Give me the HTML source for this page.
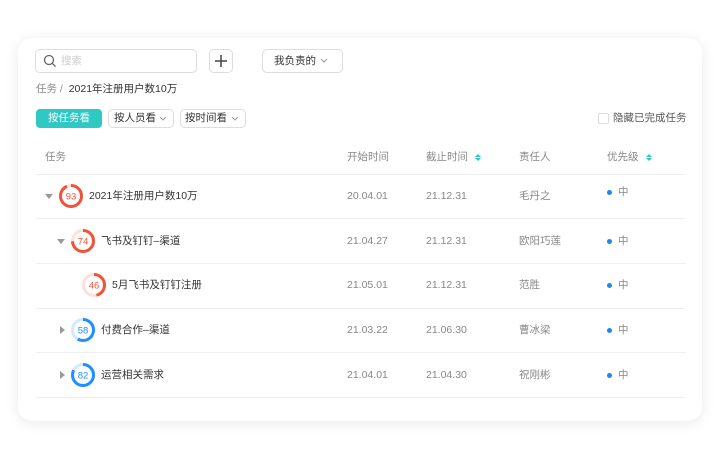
<!DOCTYPE html>
<html><head><meta charset="utf-8"><style>
*{margin:0;padding:0;box-sizing:border-box}
body{width:720px;height:449px;background:#fff;font-family:"Liberation Sans","Noto Sans CJK SC",sans-serif;position:relative;overflow:hidden;color:#333}
.card{position:absolute;left:18px;top:38px;width:684px;height:383px;background:#fff;border-radius:14px;box-shadow:0 2px 14px rgba(0,0,0,.09)}
.a{position:absolute;white-space:nowrap}
.box{position:absolute;border:1px solid #ddd;border-radius:5px;background:#fff}
.t{font-size:10.5px;line-height:14px;height:14px}
.t *{vertical-align:top}
.g{color:#888}
.line{position:absolute;left:36px;width:649px;height:1px;background:#eee}
.dot{position:absolute;width:5px;height:5px;border-radius:50%;background:#1e88f0}
.tri-d{position:absolute;width:0;height:0;border-left:4px solid transparent;border-right:4px solid transparent;border-top:5px solid #999}
.tri-r{position:absolute;width:0;height:0;border-top:4px solid transparent;border-bottom:4px solid transparent;border-left:5px solid #999}
.sort{position:absolute;width:6px;height:9px}
</style></head><body>
<div class="card"></div>
<div class="box" style="left:35px;top:49px;width:162px;height:24px"></div>
<svg class="a" style="left:43px;top:54px" width="14" height="14"><circle cx="6" cy="6" r="4.5" fill="none" stroke="#666" stroke-width="1.3"/><line x1="9.3" y1="9.3" x2="12.5" y2="12.5" stroke="#666" stroke-width="1.3"/></svg>
<div class="a t" style="left:61px;top:54px;color:#ccc">搜索</div>
<div class="box" style="left:209px;top:49px;width:24px;height:24px"></div>
<svg class="a" style="left:213px;top:53px" width="16" height="16"><path d="M8 2V14M2 8H14" stroke="#444" stroke-width="1.5"/></svg>
<div class="box" style="left:262px;top:49px;width:81px;height:24px"></div>
<div class="a t" style="left:274px;top:54px;color:#333">我负责的</div>
<svg class="a" style="left:320px;top:58px" width="8" height="6"><path d="M1 1L4 4L7 1" fill="none" stroke="#999" stroke-width="1"/></svg>
<div class="a t" style="left:36px;top:82px"><span class="g">任务 /</span>&nbsp; <span>2021年注册用户数10万</span></div>
<div class="a t" style="left:36px;top:109px;width:66px;height:19px;background:#2ec9c4;border-radius:4px;color:#fff;text-align:center;line-height:19px">按任务看</div>
<div class="box" style="left:108px;top:109px;width:66px;height:19px"></div>
<div class="a t" style="left:114px;top:111px">按人员看</div>
<svg class="a" style="left:159px;top:116px" width="8" height="6"><path d="M1 1L4 4L7 1" fill="none" stroke="#999"/></svg>
<div class="box" style="left:180px;top:109px;width:66px;height:19px"></div>
<div class="a t" style="left:185px;top:111px">按时间看</div>
<svg class="a" style="left:231px;top:116px" width="8" height="6"><path d="M1 1L4 4L7 1" fill="none" stroke="#999"/></svg>
<div class="box" style="left:598px;top:113px;width:11px;height:11px;border-radius:2px"></div>
<div class="a t" style="left:613px;top:111px;color:#555">隐藏已完成任务</div>

<div class="a t g" style="left:45px;top:150px">任务</div>
<div class="a t g" style="left:347px;top:150px">开始时间</div>
<div class="a t g" style="left:426px;top:150px">截止时间</div>
<div class="a t g" style="left:519px;top:150px">责任人</div>
<div class="a t g" style="left:607px;top:150px">优先级</div>
<svg class="sort" style="left:475px;top:153px"><path d="M0 4L3 1L6 4Z M0 5L3 8L6 5Z" fill="#2ec9c4"/></svg>
<svg class="sort" style="left:646px;top:153px"><path d="M0 4L3 1L6 4Z M0 5L3 8L6 5Z" fill="#2ec9c4"/></svg>
<div class="line" style="top:174px"></div>
<div class="line" style="top:218px"></div>
<div class="line" style="top:263px"></div>
<div class="line" style="top:308px"></div>
<div class="line" style="top:352px"></div>
<div class="line" style="top:397px"></div>

<svg class="a" style="left:0;top:0" width="720" height="449">
<g fill="none" stroke-width="3">
<circle cx="71" cy="196" r="10.5" stroke="#fde0da"/><circle cx="71" cy="196" r="10.5" stroke="#f0533a" stroke-dasharray="61.4 66" transform="rotate(-90 71 196)"/>
<circle cx="83" cy="241" r="10.5" stroke="#fde0da"/><circle cx="83" cy="241" r="10.5" stroke="#f0533a" stroke-dasharray="48.8 66" transform="rotate(-90 83 241)"/>
<circle cx="94" cy="285" r="10.5" stroke="#fde0da"/><circle cx="94" cy="285" r="10.5" stroke="#f0533a" stroke-dasharray="30.3 66" transform="rotate(-90 94 285)"/>
<circle cx="83" cy="330" r="10.5" stroke="#d3e9ff"/><circle cx="83" cy="330" r="10.5" stroke="#1e90ff" stroke-dasharray="38.3 66" transform="rotate(-90 83 330)"/>
<circle cx="83" cy="375" r="10.5" stroke="#d3e9ff"/><circle cx="83" cy="375" r="10.5" stroke="#1e90ff" stroke-dasharray="54.1 66" transform="rotate(-90 83 375)"/>
</g>
<g font-family="Liberation Sans" font-size="9.5" text-anchor="middle">
<text x="71" y="199.5" fill="#f0533a">93</text>
<text x="83" y="244.5" fill="#f0533a">74</text>
<text x="94" y="288.5" fill="#f0533a">46</text>
<text x="83" y="333.5" fill="#1e90ff">58</text>
<text x="83" y="378.5" fill="#1e90ff">82</text>
</g>
</svg>
<div class="tri-d" style="left:45px;top:194px"></div>
<div class="tri-d" style="left:57px;top:239px"></div>
<div class="tri-r" style="left:60px;top:326px"></div>
<div class="tri-r" style="left:60px;top:371px"></div>

<div class="a t" style="left:89px;top:189px">2021年注册用户数10万</div>
<div class="a t" style="left:101px;top:234px">飞书及钉钉–渠道</div>
<div class="a t" style="left:112px;top:278px">5月飞书及钉钉注册</div>
<div class="a t" style="left:101px;top:323px">付费合作–渠道</div>
<div class="a t" style="left:101px;top:368px">运营相关需求</div>

<div class="a t g" style="left:347px;top:189px">20.04.01</div><div class="a t g" style="left:426px;top:189px">21.12.31</div><div class="a t g" style="left:519px;top:189px">毛丹之</div>
<div class="a t g" style="left:347px;top:234px">21.04.27</div><div class="a t g" style="left:426px;top:234px">21.12.31</div><div class="a t g" style="left:519px;top:234px">欧阳巧莲</div>
<div class="a t g" style="left:347px;top:278px">21.05.01</div><div class="a t g" style="left:426px;top:278px">21.12.31</div><div class="a t g" style="left:519px;top:278px">范胜</div>
<div class="a t g" style="left:347px;top:323px">21.03.22</div><div class="a t g" style="left:426px;top:323px">21.06.30</div><div class="a t g" style="left:519px;top:323px">曹冰梁</div>
<div class="a t g" style="left:347px;top:368px">21.04.01</div><div class="a t g" style="left:426px;top:368px">21.04.30</div><div class="a t g" style="left:519px;top:368px">祝刚彬</div>

<div class="dot" style="left:607px;top:190px"></div><div class="a t g" style="left:618px;top:185px">中</div>
<div class="dot" style="left:607px;top:239px"></div><div class="a t g" style="left:618px;top:234px">中</div>
<div class="dot" style="left:607px;top:283px"></div><div class="a t g" style="left:618px;top:278px">中</div>
<div class="dot" style="left:607px;top:328px"></div><div class="a t g" style="left:618px;top:323px">中</div>
<div class="dot" style="left:607px;top:373px"></div><div class="a t g" style="left:618px;top:368px">中</div>
</body></html>
